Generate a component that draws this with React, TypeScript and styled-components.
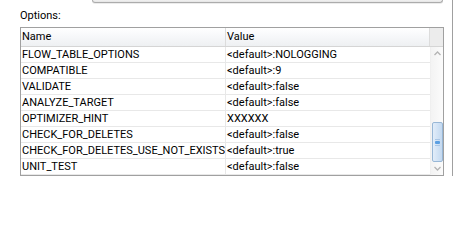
import React from "react";
import styled, { createGlobalStyle } from "styled-components";

const GlobalStyle = createGlobalStyle`
  html, body {
    margin: 0;
    padding: 0;
    background: #ffffff;
  }
  body {
    font-family: Roboto, "Liberation Sans", Arial, sans-serif;
    font-size: 11px;
    color: #000;
  }
`;

const Page = styled.div`
  width: 455px;
  height: 250px;
  background: #fff;
  overflow: hidden;
`;

const Panel = styled.div`
  width: 453px;
  height: 176px;
  box-sizing: border-box;
  border-right: 1px solid #a0a0a0;
  padding: 0 8px 0 20px;
  display: flex;
  flex-direction: column;
`;

const TopBox = styled.div`
  margin-left: 72px;
  margin-right: 1px;
  height: 4px;
  box-sizing: border-box;
  border: 1px solid #acacac;
  border-top: none;
  border-radius: 0 0 3px 3px;
  background: linear-gradient(#f2f2f2, #e4e4e4);
  box-shadow: 0 1px 0 #ececec;
`;

const Label = styled.div`
  margin-top: 6px;
  height: 13px;
  line-height: 13px;
  margin-bottom: 5px;
`;

const Table = styled.div`
  border: 1px solid #a0a0a0;
  display: flex;
  flex-direction: column;
`;

const HeaderRow = styled.div`
  display: flex;
  height: 19px;
  box-sizing: border-box;
  border-bottom: 1px solid #d5d5d5;
`;

const HeaderCell = styled.div<{ $w: number }>`
  width: ${(p) => p.$w}px;
  box-sizing: border-box;
  padding-left: 1px;
  line-height: 17px;
  border-right: 1px solid #dcdcdc;
  background: linear-gradient(#ffffff 0%, #f7f8fa 45%, #eef0f2 100%);
`;

const HeaderFiller = styled.div`
  flex: 1;
  background: #ececec;
`;

const Body = styled.div`
  display: flex;
`;

const Rows = styled.div`
  width: 409px;
  display: flex;
  flex-direction: column;
`;

const Row = styled.div`
  display: flex;
  height: 16px;
  box-sizing: border-box;
  border-bottom: 1px solid #e8e8e8;
`;

const Cell = styled.div<{ $w: number }>`
  width: ${(p) => p.$w}px;
  box-sizing: border-box;
  padding-left: 1px;
  line-height: 15px;
  white-space: nowrap;
  overflow: hidden;
  border-right: 1px solid #e8e8e8;
  &:last-child {
    border-right: none;
  }
`;

const ScrollBar = styled.div`
  width: 13px;
  display: flex;
  flex-direction: column;
  align-items: stretch;
  background: linear-gradient(90deg, #f3f3f3, #fbfbfb);
  border-left: 1px solid #efefef;
  box-sizing: border-box;
`;

const ArrowBox = styled.div`
  height: 13px;
  display: flex;
  align-items: center;
  justify-content: center;
`;

const Track = styled.div`
  flex: 1;
  display: flex;
  flex-direction: column;
  justify-content: flex-end;
`;

const Thumb = styled.div`
  height: 40px;
  margin-left: 1px;
  box-sizing: border-box;
  border: 1px solid #98b7d6;
  border-radius: 2px;
  background: linear-gradient(90deg, #e2edf9, #cfe1f4 60%, #c4d9f0);
  display: flex;
  align-items: center;
  justify-content: center;
`;

const Chevron = ({ up }: { up?: boolean }) => (
  <svg width="7" height="5" viewBox="0 0 7 5">
    <path
      d={up ? "M0.5 4 L3.5 1 L6.5 4" : "M0.5 1 L3.5 4 L6.5 1"}
      fill="none"
      stroke="#b4b4b4"
      strokeWidth="1.3"
    />
  </svg>
);

const Grip = () => (
  <svg width="7" height="9" viewBox="0 0 7 9">
    <rect x="1" y="1" width="5" height="1" fill="#a9c6e6" />
    <rect x="1" y="3" width="5" height="3" rx="1" fill="#5b9fe2" />
    <rect x="1" y="7" width="5" height="1" fill="#a9c6e6" />
  </svg>
);

const rows: [string, string][] = [
  ["FLOW_TABLE_OPTIONS", "<default>:NOLOGGING"],
  ["COMPATIBLE", "<default>:9"],
  ["VALIDATE", "<default>:false"],
  ["ANALYZE_TARGET", "<default>:false"],
  ["OPTIMIZER_HINT", "XXXXXX"],
  ["CHECK_FOR_DELETES", "<default>:false"],
  ["CHECK_FOR_DELETES_USE_NOT_EXISTS", "<default>:true"],
  ["UNIT_TEST", "<default>:false"],
];

export default function App() {
  return (
    <Page>
      <GlobalStyle />
      <Panel>
        <TopBox />
        <Label>Options:</Label>
        <Table>
          <HeaderRow>
            <HeaderCell $w={205}>Name</HeaderCell>
            <HeaderCell $w={204}>Value</HeaderCell>
            <HeaderFiller />
          </HeaderRow>
          <Body>
            <Rows>
              {rows.map(([n, v]) => (
                <Row key={n}>
                  <Cell $w={205}>{n}</Cell>
                  <Cell $w={204}>{v}</Cell>
                </Row>
              ))}
            </Rows>
            <ScrollBar>
              <ArrowBox>
                <Chevron up />
              </ArrowBox>
              <Track>
                <Thumb>
                  <Grip />
                </Thumb>
              </Track>
              <ArrowBox>
                <Chevron />
              </ArrowBox>
            </ScrollBar>
          </Body>
        </Table>
      </Panel>
    </Page>
  );
}
